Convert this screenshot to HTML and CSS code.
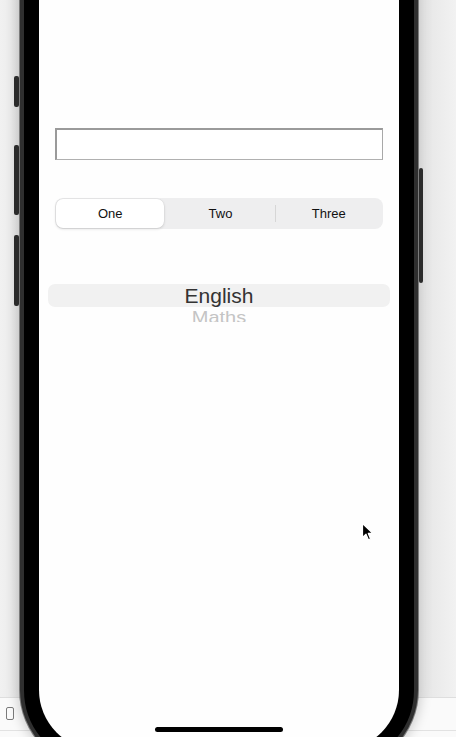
FILE: index.html
```html
<!DOCTYPE html>
<html lang="en">
<head>
    <meta charset="UTF-8">
    <meta name="viewport" content="width=device-width, initial-scale=1.0">
    <title>Simulator - Picker</title>
    <link rel="stylesheet" href="styles.css">
</head>
<body>

<div class="desk">
    <!-- simulator bottom bar, sits under the phone -->
    <div class="toolbar">
        <span class="device-icon"></span>
    </div>

    <div class="phone">
        <span class="side-btn btn-mute"></span>
        <span class="side-btn btn-vol-up"></span>
        <span class="side-btn btn-vol-down"></span>
        <span class="side-btn btn-power"></span>

        <div class="screen">
            <input type="text" class="field">

            <div class="segmented">
                <div class="segment active">One</div>
                <div class="segment">Two</div>
                <div class="segment divided">Three</div>
            </div>

            <div class="picker">
                <div class="picker-row selected">English</div>
                <div class="picker-row next">Maths</div>
            </div>

            <div class="home-bar"></div>
        </div>
    </div>

    <svg class="pointer" width="14" height="20" viewBox="0 0 14 20">
        <path d="M1.5 1.5 L1.5 15.5 L5 12.2 L7.4 17.8 L9.6 16.9 L7.3 11.4 L11.8 11.4 Z" fill="#000" stroke="#fff" stroke-width="1.2" stroke-linejoin="round"/>
    </svg>
</div>

</body>
</html>
```

FILE: styles.css
```css
* {
    box-sizing: border-box;
}
body {
    margin: 0;
    padding: 0;
    font-family: 'Liberation Sans', Arial, sans-serif;
    background-color: #efefef;
}
.desk {
    position: relative;
    display: grid;
    grid-template-rows: 737px;
    grid-template-columns: 456px;
    height: 737px;
    overflow: hidden;
    background: linear-gradient(to right, #f1f1f1 0%, #e9e9e9 4%, #f1f1f1 10%, #f1f1f1 90%, #e8e8e8 94%, #f2f2f2 100%);
}
.toolbar {
    grid-area: 1 / 1;
    align-self: end;
    height: 40px;
    background: #fafafa;
    border-top: 1px solid #dedede;
    padding: 9px 0 0 6px;
}
.toolbar::after {
    content: "";
    display: block;
    margin-top: 10px;
    border-top: 1px solid #e2e2e2;
    margin-left: -6px;
}
.device-icon {
    display: block;
    width: 8px;
    height: 13px;
    border: 1px solid #7a7a7a;
    border-radius: 2px;
}

/* phone */
.phone {
    grid-area: 1 / 1;
    justify-self: start;
    align-self: start;
    position: relative;
    margin: -160px 0 0 20px;
    width: 398px;
    padding: 15px;
    background: #000;
    border: 4px solid #2f2f2f;
    border-radius: 79px;
    box-shadow: 0 0 0 1px #7c7c7c, 0 0 12px 3px rgba(0, 0, 0, 0.18);
}
.side-btn {
    position: absolute;
    width: 5px;
    background: #2b2b2b;
    border-radius: 2px;
}
.btn-mute { left: -10px; top: 232px; height: 31px; }
.btn-vol-up { left: -10px; top: 301px; height: 70px; }
.btn-vol-down { left: -10px; top: 391px; height: 71px; }
.btn-power { right: -9px; top: 324px; height: 115px; width: 4px; }

.screen {
    position: relative;
    height: 891px;
    background: #fefefe;
    border-radius: 60px;
    padding: 269px 16px 0 16px;
    display: flex;
    flex-direction: column;
    overflow: hidden;
}
.field {
    height: 32px;
    width: 100%;
    margin: 0;
    border-style: solid;
    border-width: 2px 1px 1px 2px;
    border-color: #9a9a9a #a8a8a8 #b0b0b0 #9a9a9a;
    background: #fff;
}

/* segmented control */
.segmented {
    display: flex;
    margin-top: 38px;
    height: 31px;
    padding: 0;
    background: #eeeeef;
    border-radius: 8px;
}
.segment {
    flex: 1;
    display: flex;
    align-items: center;
    justify-content: center;
    font-size: 13px;
    color: #111;
    border-radius: 7px;
}
.segment.active {
    margin: 1px 2px 1px 1px;
    background: #fff;
    box-shadow: 0 1px 3px rgba(0, 0, 0, 0.14), 0 0 0 0.5px rgba(0, 0, 0, 0.05);
}
.segment.divided {
    position: relative;
}
.segment.divided::before {
    content: "";
    position: absolute;
    left: 0;
    top: 7px;
    bottom: 7px;
    border-left: 1px solid #d6d6d6;
}

/* picker wheel */
.picker {
    margin: 55px -7px 0 -7px;
    height: 38px;
    overflow: hidden;
}
.picker-row {
    height: 23px;
    line-height: 23px;
    text-align: center;
}
.picker-row.selected {
    background: #f1f1f1;
    border-radius: 7px;
    font-size: 21px;
    color: #333;
}
.picker-row.next {
    padding-top: 2px;
    font-size: 20px;
    color: #c4c4c4;
    transform: scaleY(0.8);
    transform-origin: top;
}

.home-bar {
    margin: auto auto 18px auto;
    width: 128px;
    height: 5px;
    border-radius: 3px;
    background: #000;
}

.pointer {
    position: absolute;
    left: 361px;
    top: 522px;
}
```
